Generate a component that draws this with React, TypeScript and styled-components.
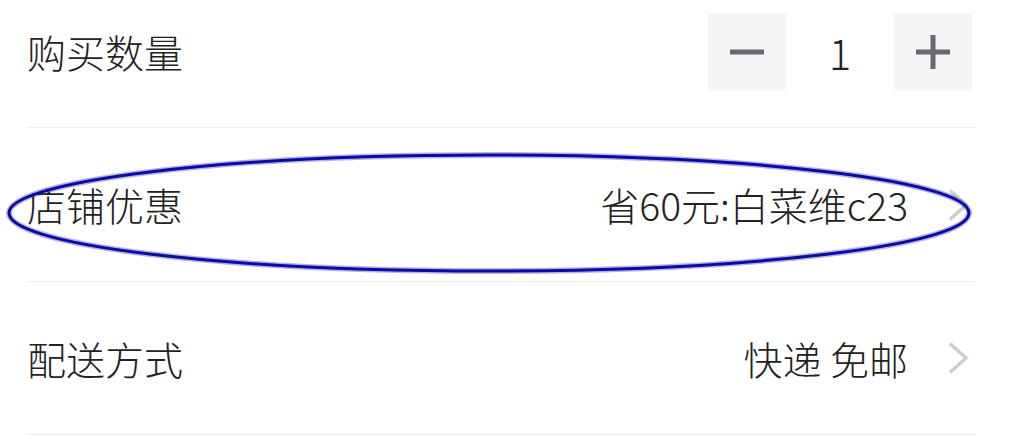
import React, { useState } from 'react'
import styled, { createGlobalStyle } from 'styled-components'

const GlobalStyle = createGlobalStyle`
  html, body {
    margin: 0;
    padding: 0;
    background: #ffffff;
  }
  body {
    font-family: "Noto Sans CJK SC", "Noto Sans", sans-serif;
    color: #222222;
  }
`

const Page = styled.div`
  position: relative;
  width: 1011px;
  height: 439px;
  overflow: hidden;
  background: #ffffff;
`

const List = styled.div`
  display: flex;
  flex-direction: column;
  margin-left: 27px;
  width: 948px;
`

const Row = styled.div<{ height: number; shift?: number }>`
  display: flex;
  align-items: center;
  justify-content: space-between;
  height: ${(props) => props.height}px;
  padding-bottom: ${(props) => props.shift || 0}px;
  padding-right: 3px;
  box-sizing: border-box;
  border-bottom: 1px solid #ececec;
`

const Label = styled.div`
  font-size: 39px;
  font-weight: 300;
  line-height: 1;
  color: #222222;
`

const Value = styled.div`
  display: flex;
  align-items: center;
  gap: 40px;
  font-size: 39px;
  font-weight: 300;
  line-height: 1;
  color: #222222;
`

const Chevron = styled.svg`
  width: 24px;
  height: 32px;
  flex-shrink: 0;
`

const Stepper = styled.div`
  display: flex;
  align-items: center;
`

const StepButton = styled.button`
  display: flex;
  align-items: center;
  justify-content: center;
  width: 78px;
  height: 77px;
  padding: 0;
  border: none;
  background: #f5f5f7;
  cursor: pointer;
`

const Count = styled.div`
  width: 108px;
  text-align: center;
  font-size: 42px;
  font-weight: 300;
  line-height: 1;
  color: #222222;
`

const Annotation = styled.svg`
  position: absolute;
  left: 0;
  top: 0;
  width: 1011px;
  height: 439px;
  pointer-events: none;
`

const ChevronIcon = () => (
  <Chevron viewBox="0 0 24 32">
    <path d="M2 1.5 L18 16 L2 30.5" fill="none" stroke="#cdcdcd" strokeWidth="3.5" />
  </Chevron>
)

export default function App() {
  const [count, setCount] = useState(1)

  return (
    <Page>
      <GlobalStyle />
      <List>
        <Row height={128} shift={24}>
          <Label>购买数量</Label>
          <Stepper>
            <StepButton onClick={() => setCount((c) => Math.max(1, c - 1))}>
              <svg width="36" height="36" viewBox="0 0 36 36">
                <rect x="1" y="15.5" width="34" height="5" fill="#666a70" />
              </svg>
            </StepButton>
            <Count>{count}</Count>
            <StepButton onClick={() => setCount((c) => c + 1)}>
              <svg width="36" height="36" viewBox="0 0 36 36">
                <rect x="1" y="15.5" width="34" height="5" fill="#666a70" />
                <rect x="15.5" y="1" width="5" height="34" fill="#666a70" />
              </svg>
            </StepButton>
          </Stepper>
        </Row>
        <Row height={154}>
          <Label>店铺优惠</Label>
          <Value>
            <span>省60元:白菜维c23</span>
            <ChevronIcon />
          </Value>
        </Row>
        <Row height={153}>
          <Label>配送方式</Label>
          <Value>
            <span>快递 免邮</span>
            <ChevronIcon />
          </Value>
        </Row>
      </List>
      <Annotation viewBox="0 0 1011 439">
        <ellipse cx="489" cy="213" rx="480" ry="58" fill="none" stroke="#2a2a9a" strokeOpacity="0.35" strokeWidth="6" />
        <ellipse cx="489" cy="213" rx="480" ry="58" fill="none" stroke="#0a0aa8" strokeWidth="3" />
      </Annotation>
    </Page>
  )
}
